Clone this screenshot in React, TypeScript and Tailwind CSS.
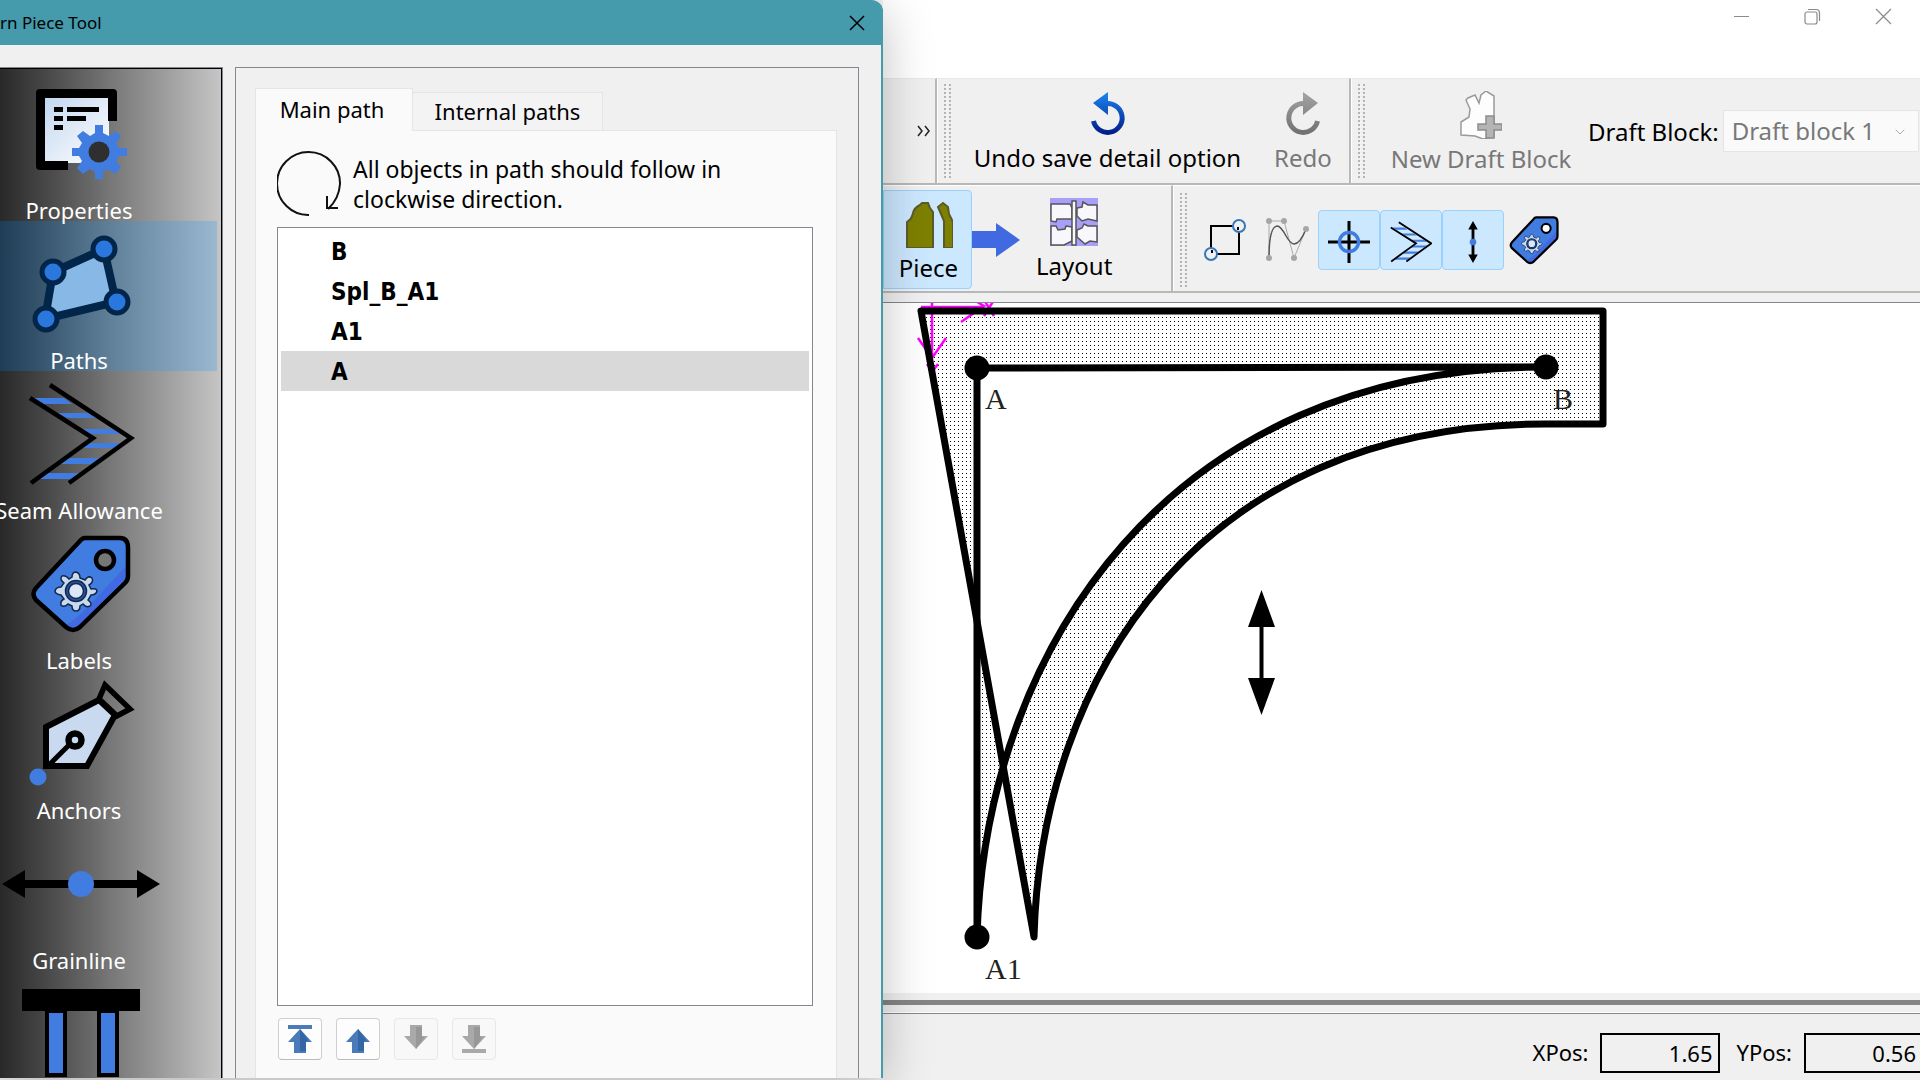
import { useState } from 'react'
import type { ReactNode } from 'react'
import { ChevronDown } from 'lucide-react'

const uiFont = "font-['Noto_Sans','Open_Sans',sans-serif]"

const GEAR =
  'M-4 -27H4V-19L10 -16L17 -21L22 -15L17 -9L20 -4H28V4H20L17 9L22 15L16 22L9 17L4 20V27H-4V20L-9 17L-16 22L-22 16L-17 9L-20 4H-27V-4H-20L-17 -9L-22 -16L-16 -21L-9 -16L-4 -19Z'

function TagShape() {
  return (
    <g>
      <path d="M85 17H120Q128 17 128 27V55Q128 59 125 62L80 106Q73 112 66 106L36 79Q31 73 36 67L79 21Q82 17 85 17Z" fill="#417de0" />
      <path d="M127 44V56L79 105Q73 111 65 105Q76 98 88 86Z" fill="#4169e1" />
      <circle cx="105" cy="39" r="9" fill="#767676" stroke="#000" strokeWidth="4.5" />
      <path d="M85 17H120Q128 17 128 27V55Q128 59 125 62L80 106Q73 112 66 106L36 79Q31 73 36 67L79 21Q82 17 85 17Z" fill="none" stroke="#000" strokeWidth="4.5" strokeLinejoin="round" />
      <g transform="translate(76 70)">
        <path
          d="M0 -19Q4 -18 4 -13Q7 -12 9 -11Q12 -16 16 -13Q18 -9 13 -6Q14 -4 15 -2Q21 -3 21 0Q20 4 15 4L12 9Q17 13 14 15Q10 17 7 13L4 15Q4 20 0 20Q-4 20 -4 15L-8 13Q-12 17 -15 14Q-16 10 -12 8L-15 4Q-21 3 -21 0Q-20 -4 -15 -4L-12 -8Q-17 -12 -14 -15Q-10 -16 -7 -12L-4 -14Q-4 -19 0 -19Z"
          fill="#c8d9f0" stroke="#12284c" strokeWidth="1.5"
        />
        <circle r="9" fill="#dbe7f7" stroke="#0f2a55" strokeWidth="4.5" />
        <circle r="9" fill="none" stroke="#2c5192" strokeWidth="1.5" />
      </g>
    </g>
  )
}

function SeamShape() {
  return (
    <g>
      <g fill="#417de0">
        <path d="M34 27H64L72 33H44Z M58 42H88L96 47H67Z M82 58H112L121 63H90Z M86 72H122L113 77H78Z M68 87H100L91 93H60Z M47 102H80L71 108H38Z" />
      </g>
      <path d="M30 27L93 67L31 112 M50 14L131 67L69 112" fill="none" stroke="#000" strokeWidth="4.5" />
    </g>
  )
}

const PropertiesIcon = (
  <>
    <defs>
      <linearGradient id="sheet" x1="0" y1="0" x2="1" y2="1">
        <stop offset="0" stopColor="#c3d7f0" />
        <stop offset="1" stopColor="#fff" />
      </linearGradient>
    </defs>
    <rect x="44" y="27" width="65" height="65" fill="url(#sheet)" />
    <path d="M117 50V22Q117 18 113 18H40Q36 18 36 22V95Q36 99 40 99H68V90H45V27H108V50Z" fill="#000" />
    <path d="M54 36H63V41H54Z M67 36H99V41H67Z M54 45H63V50H54Z M67 45H86V50H67Z M54 54H63V59H54Z" fill="#000" />
    <g transform="translate(99 81)">
      <path d={GEAR} fill="#417de0" />
      <circle r="10.5" fill="#2f2f2f" />
    </g>
  </>
)

const PathsIcon = (
  <>
    <path d="M53 51L104 28L116 81L45 98Z" fill="#88b8e6" stroke="#02264a" strokeWidth="8" />
    <g fill="#2a78dd" stroke="#02264a" strokeWidth="5">
      <circle cx="53" cy="51" r="11" />
      <circle cx="104" cy="28" r="11" />
      <circle cx="117" cy="81" r="11" />
      <circle cx="46" cy="98" r="11" />
    </g>
  </>
)

const AnchorsIcon = (
  <>
    <path d="M46 56L99 29L115 44L87 95H46Z" fill="#c8d9f0" stroke="#000" strokeWidth="6" />
    <path d="M105 14L130 38L117 45L99 28Z" fill="none" stroke="#000" strokeWidth="5.5" />
    <path d="M48 95L71 72" stroke="#000" strokeWidth="5" />
    <circle cx="75" cy="69" r="6.5" fill="#c8d9f0" stroke="#000" strokeWidth="6.5" />
    <circle cx="38" cy="106" r="8.5" fill="#417de0" />
  </>
)

const GrainlineIcon = (
  <>
    <path d="M2 63L25 49V59H137V49L160 63L137 77V67H25V77Z" fill="#000" />
    <circle cx="81" cy="63" r="13" fill="#417de0" />
  </>
)

const PassmarksIcon = (
  <>
    <path d="M22 18H140V40H22Z" fill="#000" />
    <path d="M47 40H65V104H47Z M99 40H117V104H99Z" fill="#417de0" stroke="#000" strokeWidth="4" />
  </>
)

const pages: { name: string; icon: ReactNode }[] = [
  { name: 'Properties', icon: PropertiesIcon },
  { name: 'Paths', icon: PathsIcon },
  { name: 'Seam Allowance', icon: <SeamShape /> },
  { name: 'Labels', icon: <TagShape /> },
  { name: 'Anchors', icon: AnchorsIcon },
  { name: 'Grainline', icon: GrainlineIcon },
]

const nodes = ['B', 'Spl_B_A1', 'A1', 'A']

function MoveIcon({ down, bar, off }: { down?: boolean; bar?: boolean; off?: boolean }) {
  const light = off ? '#a9a9a9' : '#4a7ab8'
  const dark = off ? '#989898' : '#3465a4'
  return (
    <svg width="24" height="28" viewBox="0 0 24 28">
      <g transform={down ? 'translate(0 28) scale(1 -1)' : undefined}>
        {bar && <path d="M0 0H24V4H0Z" fill={light} />}
        <path d="M12 4L24 17H18V28H6V17H0Z" fill={light} />
        <path d="M12 4L20 15L18 17V26H12Z" fill={dark} />
      </g>
    </svg>
  )
}

function PieceDialog() {
  const [page, setPage] = useState('Paths')
  const [node, setNode] = useState('A')

  return (
    <section className="relative z-10 flex w-[883px] shrink-0 flex-col rounded-tr-xl border-r-2 border-[#459aab] bg-[#f0f0f0] shadow-[0_10px_50px_rgba(0,0,0,0.25)]">
      <header className="-mr-0.5 flex h-[45px] shrink-0 items-center justify-between rounded-tr-xl bg-[#459aab] pt-px pr-3.5">
        <h1 className="text-[17px]">rn Piece Tool</h1>
        <button aria-label="Close" className="flex h-8 w-6 items-center justify-center">
          <svg width="16" height="16" viewBox="0 0 16 16" stroke="#000" strokeWidth="1.5">
            <path d="M1 1L15 15M15 1L1 15" />
          </svg>
        </button>
      </header>

      <div className="flex min-h-0 flex-1 gap-3 pt-[22px] pr-[22px]">
        {/* Page list */}
        <nav className="w-[223px] shrink-0 overflow-hidden border-t border-r border-[#828790] bg-[#f0f0f0]">
          <div className="h-full overflow-hidden border-t border-r border-black bg-linear-to-r from-[#292929] via-[#777777] to-[#c6c6c6] pt-0.5 pr-1">
            {pages.map(p => (
              <button
                key={p.name}
                onClick={() => setPage(p.name)}
                className={`flex h-[150px] w-full flex-col items-center pr-[59px] text-white ${
                  page === p.name ? 'bg-linear-to-r from-[#1f3d55] via-[#5f7f98] to-[#9bb8d1]' : ''
                }`}
              >
                <svg width="158" height="128" viewBox="0 0 158 128" className="shrink-0 overflow-visible">{p.icon}</svg>
                <span className="text-[22px] leading-[22px] whitespace-nowrap">{p.name}</span>
              </button>
            ))}
            <button aria-label="Passmarks" className="block">
              <svg width="158" height="128" viewBox="0 0 158 128">{PassmarksIcon}</svg>
            </button>
          </div>
        </nav>

        <div className="flex min-w-0 flex-1 flex-col border-x border-t border-[#828790] pt-5 pr-[21px] pl-[19px] text-[23px]">
          <div role="tablist" className="flex items-end text-[22px]">
            <button role="tab" aria-selected="true" className="relative z-10 -mb-px h-[43px] w-[158px] border-x border-t border-[#e5e5e5] bg-[#fafafa] pr-1 pb-0.5">
              Main path
            </button>
            <button role="tab" aria-selected="false" className="h-[38px] w-[190px] border-t border-r border-[#e5e5e5] bg-[#f3f3f3]">
              Internal paths
            </button>
          </div>

          <div className="flex min-h-0 flex-1 flex-col border-x border-t border-[#e5e5e5] bg-[#fafafa] pr-[23px] pl-[21px]">
            <div className="flex items-center gap-3 pt-5 pb-[11px]">
              <svg width="64" height="65" viewBox="0 0 64 65" fill="none" stroke="#111" strokeWidth="2">
                <path d="M32 64A31.5 31.5 0 1 1 63 33Q62 48 51 58" />
                <path d="M50 45V57H61" />
              </svg>
              <p className="max-w-[400px] leading-[30px]">All objects in path should follow in clockwise direction.</p>
            </div>

            <ul className="flex-1 border border-[#828790] bg-white p-[3px] font-['DejaVu_Sans_Condensed','DejaVu_Sans',sans-serif] font-bold">
              {nodes.map(n => (
                <li key={n}>
                  <button
                    onClick={() => setNode(n)}
                    className={`h-10 w-full pt-0.5 pl-[50px] text-left text-[24px] ${node === n ? 'bg-[#d9d9d9]' : ''}`}
                  >
                    {n}
                  </button>
                </li>
              ))}
            </ul>

            <div className="flex gap-3.5 pt-3 pb-[18px] pl-px">
              <button aria-label="Move to top" className="flex h-[42px] w-11 items-center justify-center rounded border border-[#d0d0d0] border-b-[#bbb] bg-[#fdfdfd]">
                <MoveIcon bar />
              </button>
              <button aria-label="Move up" className="flex h-[42px] w-11 items-center justify-center rounded border border-[#d0d0d0] border-b-[#bbb] bg-[#fdfdfd]">
                <MoveIcon />
              </button>
              <button aria-label="Move down" disabled className="flex h-[42px] w-11 items-center justify-center rounded border border-[#e8e8e8] bg-[#f8f8f8]">
                <MoveIcon down off />
              </button>
              <button aria-label="Move to bottom" disabled className="flex h-[42px] w-11 items-center justify-center rounded border border-[#e8e8e8] bg-[#f8f8f8]">
                <MoveIcon down bar off />
              </button>
            </div>
          </div>
        </div>
      </div>
    </section>
  )
}

function Handle() {
  return (
    <svg width="8" height="94" className="shrink-0">
      <defs>
        <pattern id="grip" width="5" height="4" patternUnits="userSpaceOnUse">
          <rect width="2" height="2" fill="#b4b4b4" />
          <rect x="2" y="2" width="1" height="1" fill="#fff" />
        </pattern>
      </defs>
      <rect width="7" height="94" fill="url(#grip)" />
    </svg>
  )
}

function TurnArrow({ from, to, id, flip }: { from: string; to: string; id: string; flip?: boolean }) {
  return (
    <svg width="36" height="44" viewBox="0 0 36 44">
      <defs>
        <linearGradient id={id} x1="0" y1="0" x2="0" y2="44" gradientUnits="userSpaceOnUse">
          <stop offset="0" stopColor={from} />
          <stop offset="1" stopColor={to} />
        </linearGradient>
      </defs>
      <g transform={flip ? 'translate(36 0) scale(-1 1)' : undefined}>
        <path d="M16 11.500A14.500 14.500 0 1 1 3.500 29" fill="none" stroke={`url(#${id})`} strokeWidth="5" />
        <path d="M3 11L18 0V23Z" fill={`url(#${id})`} />
      </g>
    </svg>
  )
}

function Toolbars() {
  return (
    <div className="shrink-0 text-[24px]">
      <div className="flex h-[107px] border-b-2 border-[#b8b8b8] bg-[#f0f0f0]">
        <div className="flex w-[54px] items-center justify-end border-t border-r-2 border-[#b8b8b8] border-t-[#e8e8e8] pr-1">
          <button aria-label="More tools">
            <svg width="14" height="12" viewBox="0 0 14 12" fill="none" stroke="#222" strokeWidth="1.5">
              <path d="M1 1L5 6L1 11M8 1L12 6L8 11" />
            </svg>
          </button>
        </div>
        <div className="flex w-[414px] items-center border-t border-r-2 border-l border-t-[#e8e8e8] border-r-[#b8b8b8] border-l-white pl-1.5">
          <Handle />
          <button className="ml-[13px] flex w-[285px] flex-col items-center gap-1.5 pt-1">
            <TurnArrow id="undo" from="#1c86f2" to="#001684" />
            <span className="leading-8 whitespace-nowrap">Undo save detail option</span>
          </button>
          <button disabled className="ml-6 flex flex-col items-center gap-1.5 pt-1 text-[#787878]">
            <TurnArrow id="redo" from="#a4a4a4" to="#6e6e6e" flip />
            <span className="leading-8">Redo</span>
          </button>
        </div>
        <div className="flex flex-1 items-center border-t border-l border-t-[#e8e8e8] border-l-white pl-1.5">
          <Handle />
          <button disabled className="ml-3.5 flex w-[202px] shrink-0 flex-col items-center gap-1 pt-1 text-[#787878]">
            <svg width="42" height="48" viewBox="0 0 42 48">
              <path d="M6 9L8 7L15 4L19 12L21 4L26 0L34 5V46L23 48L15 45L1 44V31L9 26L10 18Z" fill="#fdfdfd" stroke="#9a9a9a" strokeWidth="1.5" />
              <path d="M26 25H34V33H42V39H34V47H26V39H18V33H26Z" fill="#b4b4b4" stroke="#8c8c8c" strokeWidth="1.5" />
            </svg>
            <span className="leading-8 whitespace-nowrap">New Draft Block</span>
          </button>
          <label htmlFor="block" className="ml-1.5 shrink-0 pt-0.5 whitespace-nowrap">Draft Block:</label>
          <div className="relative ml-1 min-w-0 flex-1 pr-px">
            <select id="block" disabled className="h-[42px] w-full appearance-none border border-[#e5e5e5] bg-[#fafafa] pl-2 text-[#787878] opacity-100">
              <option>Draft block 1</option>
            </select>
            <ChevronDown size={16} strokeWidth={1.5} className="pointer-events-none absolute top-3.5 right-3 text-[#aaa]" />
          </div>
        </div>
      </div>

      <div className="flex h-[108px] border-b-2 border-[#b8b8b8] bg-[#f0f0f0]">
        <div className="flex w-[290px] items-center border-t border-r-2 border-t-white border-r-[#b8b8b8] pt-0.5">
          <button aria-pressed="true" className="flex h-[99px] w-[89px] flex-col items-center rounded-r border border-[#99d1ff] bg-[#cce8ff] pt-[11px] pl-0.5">
            <svg width="48" height="46" viewBox="0 0 48 46" fill="#7d8000" stroke="#5d5a2a" strokeWidth="2">
              <path d="M2 46V20Q7 17 8 11Q9 6 15 3L17 1H23L25 6L28 10V46Z" />
              <path d="M33 5L38 1L43 5L44 12L48 20V46H39V19Z" />
            </svg>
            <span className="pt-1 leading-8">Piece</span>
          </button>
          <svg width="48" height="36" viewBox="0 0 48 36">
            <path d="M0 9H24V1L48 18L24 35V26H0Z" fill="#4169e1" />
          </svg>
          <button className="ml-4 flex flex-col items-center gap-1">
            <svg width="48" height="48" viewBox="0 0 48 48">
              <rect width="48" height="48" fill="#a89ffa" />
              <g fill="#f8f8fc" stroke="#555" strokeWidth="1.5">
                <path d="M1 6H20L22 10V21H7L6 24L1 23Z" />
                <path d="M27 10L32 9L33 4L38 7H47V23L38 21L32 23L27 18Z" />
                <path d="M1 28L6 28L8 32L15 31L16 28L22 29V43L14 47H1Z" />
                <path d="M27 32L32 30L34 26L38 28H47V44L40 43L35 46L27 39Z" />
                <path d="M22 3H26V47H22Z" />
              </g>
            </svg>
            <span className="leading-8">Layout</span>
          </button>
        </div>
        <div className="flex flex-1 items-center border-t border-l border-white pt-0.5 pl-1.5">
          <Handle />
          <button aria-label="Show points" className="ml-1.5 flex h-[60px] w-[62px] items-center justify-center">
            <svg width="42" height="42" viewBox="0 0 42 42" fill="none">
              <path d="M7 7H35V35H7Z" stroke="#000" strokeWidth="2" />
              <circle cx="35" cy="7" r="6" fill="#f0f0f0" stroke="#3577b8" strokeWidth="2" />
              <circle cx="7" cy="35" r="6" fill="#f0f0f0" stroke="#3577b8" strokeWidth="2" />
              <path d="M34 8V11M8 34V31" stroke="#000" strokeWidth="2" />
            </svg>
          </button>
          <button aria-label="Show control points" className="flex h-[60px] w-[62px] items-center justify-center">
            <svg width="44" height="44" viewBox="0 0 44 44" fill="none">
              <path d="M4 40V3H19L29 40L41 11" stroke="#aaa" strokeWidth="1" />
              <path d="M4 40Q4 9 12 8C19 8 22 26 29 26Q35 26 41 11" stroke="#555" strokeWidth="1.5" />
              <g fill="#a6a6a6">
                <circle cx="4" cy="3" r="3" />
                <circle cx="19" cy="3" r="3" />
                <circle cx="41" cy="11" r="3" />
                <circle cx="4" cy="40" r="3" />
                <circle cx="29" cy="40" r="3" />
              </g>
            </svg>
          </button>
          <button aria-label="Show anchors" aria-pressed="true" className="flex h-[60px] w-[62px] items-center justify-center rounded-sm border border-[#99d1ff] bg-[#cce8ff] pt-1">
            <svg width="42" height="42" viewBox="0 0 42 42" fill="none">
              <path d="M21 0V42M0 21H42" stroke="#000" strokeWidth="3" />
              <circle cx="21" cy="21" r="9.500" stroke="#417de0" strokeWidth="3.500" />
            </svg>
          </button>
          <button aria-label="Show seam allowance" aria-pressed="true" className="flex h-[60px] w-[62px] items-center justify-center rounded-sm border border-[#99d1ff] bg-[#cce8ff] pt-1">
            <svg width="42" height="42" viewBox="28 11 105 105"><SeamShape /></svg>
          </button>
          <button aria-label="Show grainline" aria-pressed="true" className="flex h-[60px] w-[62px] items-center justify-center rounded-sm border border-[#99d1ff] bg-[#cce8ff] pt-1">
            <svg width="12" height="42" viewBox="0 0 12 44">
              <path d="M6 0L11 9H7.500V35H11L6 44L1 35H4.500V9H1Z" fill="#000" />
              <circle cx="6" cy="22" r="3.500" fill="#417de0" />
            </svg>
          </button>
          <button aria-label="Show labels" className="flex h-[60px] w-[60px] items-center justify-center">
            <svg width="50" height="50" viewBox="30 12 101 101"><TagShape /><circle cx="105" cy="39" r="7" fill="#fff" /></svg>
          </button>
        </div>
      </div>
      <div className="h-[9px] bg-[#f0f0f0]" />
    </div>
  )
}

const OUTLINE = 'M921 311H1603V424H1546C1198 424 1041 678 1034 937Z'
const PIECE = 'M977 368L1546 367C1170 367 985 649 977 937Z'

function Canvas() {
  return (
    <svg width="1037" height="690" viewBox="883 303 1037 690" className="block max-w-none">
      <defs>
        <pattern id="dots" x="2" y="1" width="4" height="4" patternUnits="userSpaceOnUse">
          <rect width="1" height="1" fill="#000" />
        </pattern>
      </defs>
      <path d={`${OUTLINE} ${PIECE}`} fill="url(#dots)" fillRule="evenodd" shapeRendering="crispEdges" />
      <g fill="none" stroke="#f0f" strokeWidth="2.5">
        <path d="M921 307H984M961 322L984 306L974 300M984 300L994 316M994 300L984 316" />
        <path d="M932 303V357M918 338L932 358L946 338M927 364L932 371M938 364L932 372V380" />
      </g>
      <g fill="none" stroke="#000" strokeWidth="7" strokeLinejoin="round">
        <path d={OUTLINE} />
        <path d={PIECE} />
      </g>
      <circle cx="977" cy="368" r="12.500" />
      <circle cx="1546" cy="367" r="12.500" />
      <circle cx="977" cy="937" r="12.500" />
      <path d="M1261.500 590L1275 627H1263.500V678H1275L1261.500 715L1248 678H1259.500V627H1248Z" />
      <g className="font-['Liberation_Serif',serif] text-[30px]" fill="#222">
        <text x="985" y="409">A</text>
        <text x="1553" y="409">B</text>
        <text x="985" y="979">A1</text>
      </g>
    </svg>
  )
}

export default function App() {
  return (
    <div className={`flex h-screen overflow-hidden bg-[#f0f0f0] pb-0.5 text-black ${uiFont}`}>
      <PieceDialog />

      <main className="flex min-w-0 flex-1 flex-col bg-white">
        <div className="flex h-[78px] shrink-0 items-start justify-end gap-[54px] pt-2 pr-[28px] text-[#8a8a8a]">
          <button aria-label="Minimize">
            <svg width="17" height="17" viewBox="0 0 17 17" stroke="currentColor"><path d="M1 8.500H16" /></svg>
          </button>
          <button aria-label="Restore">
            <svg width="17" height="17" viewBox="0 0 17 17" fill="none" stroke="currentColor" strokeWidth="1.200">
              <rect x="1" y="4" width="12" height="12" rx="2" />
              <path d="M4 1.500H12Q15.500 1.500 15.500 5V13" />
            </svg>
          </button>
          <button aria-label="Close window">
            <svg width="17" height="17" viewBox="0 0 17 17" stroke="currentColor" strokeWidth="1.200"><path d="M1 1L16 16M16 1L1 16" /></svg>
          </button>
        </div>

        <Toolbars />

        <div className="min-h-0 flex-1 overflow-hidden border-t border-[#828790]">
          <Canvas />
        </div>

        <div className="shrink-0 bg-[#f0f0f0]">
          <div className="h-[7px]" />
          <div className="h-[5px] bg-[#858585]" />
          <div className="h-[7px]" />
          <footer className="flex h-[66px] items-center justify-end border-t border-white pt-3.5 text-[22px] shadow-[inset_0_1px_0_#828790]">
            <label htmlFor="xpos">XPos:</label>
            <input id="xpos" readOnly defaultValue="1.65" className="ml-3 h-10 w-[120px] border-2 border-black pr-1.5 pl-2 text-right" />
            <label htmlFor="ypos" className="ml-4">YPos:</label>
            <input id="ypos" readOnly defaultValue="0.56" className="ml-3 h-10 w-[116px] border-2 border-r-0 border-black pr-1 pl-2 text-right" />
          </footer>
        </div>
      </main>
    </div>
  )
}
